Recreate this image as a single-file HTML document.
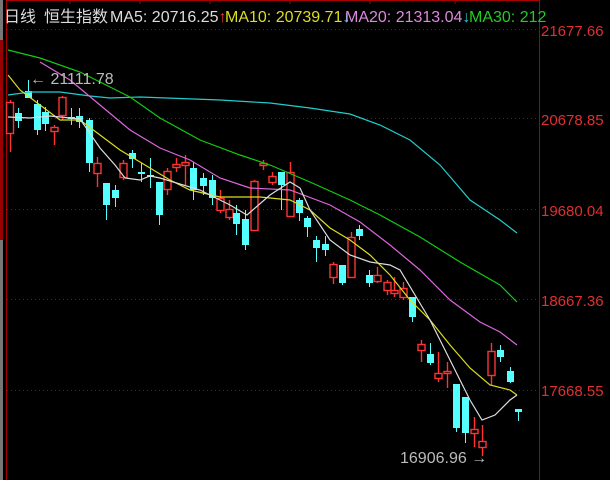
<!DOCTYPE html><html><head><style>
body{margin:0;background:#000;width:610px;height:480px;overflow:hidden;font-family:"Liberation Sans","Noto Sans CJK SC",sans-serif}
</style></head><body>
<svg width="610" height="480" xmlns="http://www.w3.org/2000/svg" style="position:absolute;left:0;top:0">
<rect width="610" height="480" fill="#000"/>
<rect x="0" y="0" width="3" height="480" fill="#777"/>
<rect x="0" y="40" width="3" height="200" fill="#900"/>
<line x1="6.5" y1="0" x2="6.5" y2="480" stroke="#a00" stroke-width="1"/>
<line x1="539.5" y1="0" x2="539.5" y2="480" stroke="#a00" stroke-width="1"/>
<line x1="6" y1="0.5" x2="540" y2="0.5" stroke="#a00"/>
<g stroke="#a00" stroke-width="1">
<line x1="70" y1="0" x2="70" y2="4"/><line x1="140" y1="0" x2="140" y2="4"/><line x1="210" y1="0" x2="210" y2="4"/><line x1="290" y1="0" x2="290" y2="4"/><line x1="370" y1="0" x2="370" y2="4"/><line x1="455" y1="0" x2="455" y2="4"/>
</g>
<g stroke="#a00" stroke-dasharray="1,3">
<line x1="7" y1="29.5" x2="539" y2="29.5"/><line x1="7" y1="118.5" x2="539" y2="118.5"/><line x1="7" y1="209.5" x2="539" y2="209.5"/><line x1="7" y1="299.5" x2="539" y2="299.5"/><line x1="7" y1="390.5" x2="539" y2="390.5"/>
</g>
<g font-size="15" fill="#e03030">
<text x="541" y="36">21677.66</text><text x="541" y="125">20678.85</text><text x="541" y="216">19680.04</text><text x="541" y="306">18667.36</text><text x="541" y="396">17668.55</text>
</g>
<g font-size="16">
<text x="4" y="22" fill="#ddd">日线</text>
<text x="44" y="22" fill="#ddd">恒生指数</text>
<text x="110" y="22" fill="#ddd">MA5: 20716.25<tspan fill="#e33">↑</tspan></text>
<text x="225" y="22" fill="#dd2">MA10: 20739.71<tspan fill="#3cc">↓</tspan></text>
<text x="345" y="22" fill="#d8d">MA20: 21313.04<tspan fill="#3cc">↓</tspan></text>
<text x="469" y="22" fill="#2c2">MA30: 212</text>
</g>
<g stroke="#f33" stroke-width="1.4" fill="#000">
<line x1="10.5" y1="100" x2="10.5" y2="152"/><rect x="6.5" y="102.5" width="7" height="31"/>
<line x1="54.5" y1="125" x2="54.5" y2="145"/><rect x="51" y="127.5" width="7" height="4"/>
<line x1="62.5" y1="96" x2="62.5" y2="120"/><rect x="59" y="97.5" width="7" height="18"/>
<line x1="97.5" y1="157" x2="97.5" y2="187"/><rect x="94" y="163.5" width="7" height="10"/>
<line x1="123.5" y1="160" x2="123.5" y2="180"/><rect x="120" y="163.5" width="7" height="14"/>
<line x1="167.5" y1="168" x2="167.5" y2="195"/><rect x="164" y="171.5" width="7" height="18"/>
<line x1="176.5" y1="158" x2="176.5" y2="172"/><rect x="173" y="164.5" width="7" height="3"/>
<line x1="185.5" y1="155" x2="185.5" y2="185"/><rect x="182" y="162.5" width="7" height="3"/>
<line x1="220.5" y1="190" x2="220.5" y2="213"/><rect x="217" y="198.5" width="7" height="12"/>
<line x1="229.5" y1="200" x2="229.5" y2="220"/><rect x="226" y="209.5" width="7" height="8"/>
<line x1="254.5" y1="180" x2="254.5" y2="230"/><rect x="251" y="181.5" width="7" height="49"/>
<line x1="263.5" y1="160" x2="263.5" y2="170"/><rect x="260" y="163.5" width="7" height="2"/>
<line x1="272.5" y1="172" x2="272.5" y2="185"/><rect x="269" y="176.5" width="7" height="6"/>
<line x1="290.5" y1="162" x2="290.5" y2="216"/><rect x="287" y="172.5" width="7" height="44"/>
<line x1="333.5" y1="262" x2="333.5" y2="284"/><rect x="330" y="264.5" width="7" height="13"/>
<line x1="351.5" y1="232" x2="351.5" y2="277"/><rect x="348" y="237.5" width="7" height="40"/>
<line x1="377.5" y1="267" x2="377.5" y2="283"/><rect x="374" y="275.5" width="7" height="6"/>
<line x1="387.5" y1="280" x2="387.5" y2="295"/><rect x="384" y="282.5" width="7" height="8"/>
<line x1="394.5" y1="277" x2="394.5" y2="297"/><rect x="391" y="290.5" width="7" height="3"/>
<line x1="403.5" y1="282" x2="403.5" y2="300"/><rect x="400" y="288.5" width="7" height="9"/>
<line x1="421.5" y1="340" x2="421.5" y2="362"/><rect x="418" y="344.5" width="7" height="6"/>
<line x1="438.5" y1="352" x2="438.5" y2="382"/><rect x="435" y="373.5" width="7" height="5"/>
<line x1="447.5" y1="362" x2="447.5" y2="388"/><rect x="444" y="371.5" width="7" height="2"/>
<line x1="474.5" y1="417" x2="474.5" y2="447"/><rect x="471" y="429.5" width="7" height="4"/>
<line x1="482.5" y1="425" x2="482.5" y2="456"/><rect x="479" y="441.5" width="7" height="6"/>
<line x1="491.5" y1="343" x2="491.5" y2="385"/><rect x="488" y="351.5" width="7" height="24"/>
</g>
<g stroke="#5ff" fill="#5ff">
<line x1="18.5" y1="108" x2="18.5" y2="128"/><rect x="15" y="113" width="7" height="8" stroke="none"/>
<line x1="28.5" y1="80" x2="28.5" y2="98"/><rect x="25" y="91" width="7" height="7" stroke="none"/>
<line x1="37.5" y1="100" x2="37.5" y2="135"/><rect x="34" y="104" width="7" height="26" stroke="none"/>
<line x1="45.5" y1="107" x2="45.5" y2="131"/><rect x="42" y="112" width="7" height="12" stroke="none"/>
<line x1="71.5" y1="108" x2="71.5" y2="125"/><rect x="68" y="117" width="7" height="2" stroke="none"/>
<line x1="79.5" y1="108" x2="79.5" y2="128"/><rect x="76" y="116" width="7" height="6" stroke="none"/>
<line x1="89.5" y1="118" x2="89.5" y2="172"/><rect x="86" y="120" width="7" height="43" stroke="none"/>
<line x1="106.5" y1="183" x2="106.5" y2="220"/><rect x="103" y="183" width="7" height="22" stroke="none"/>
<line x1="115.5" y1="185" x2="115.5" y2="207"/><rect x="112" y="190" width="7" height="8" stroke="none"/>
<line x1="132.5" y1="150" x2="132.5" y2="168"/><rect x="129" y="153" width="7" height="6" stroke="none"/>
<line x1="141.5" y1="163" x2="141.5" y2="182"/><rect x="138" y="172" width="7" height="2" stroke="none"/>
<line x1="150.5" y1="158" x2="150.5" y2="188"/><rect x="147" y="175" width="7" height="2" stroke="none"/>
<line x1="159.5" y1="182" x2="159.5" y2="225"/><rect x="156" y="182" width="7" height="33" stroke="none"/>
<line x1="193.5" y1="162" x2="193.5" y2="200"/><rect x="190" y="168" width="7" height="22" stroke="none"/>
<line x1="203.5" y1="173" x2="203.5" y2="195"/><rect x="200" y="178" width="7" height="8" stroke="none"/>
<line x1="212.5" y1="175" x2="212.5" y2="205"/><rect x="209" y="180" width="7" height="18" stroke="none"/>
<line x1="236.5" y1="205" x2="236.5" y2="235"/><rect x="233" y="213" width="7" height="11" stroke="none"/>
<line x1="245.5" y1="210" x2="245.5" y2="250"/><rect x="242" y="219" width="7" height="26" stroke="none"/>
<line x1="281.5" y1="172" x2="281.5" y2="210"/><rect x="278" y="172" width="7" height="13" stroke="none"/>
<line x1="299.5" y1="198" x2="299.5" y2="221"/><rect x="296" y="200" width="7" height="13" stroke="none"/>
<line x1="307.5" y1="216" x2="307.5" y2="237"/><rect x="304" y="218" width="7" height="9" stroke="none"/>
<line x1="316.5" y1="236" x2="316.5" y2="262"/><rect x="313" y="240" width="7" height="8" stroke="none"/>
<line x1="325.5" y1="236" x2="325.5" y2="256"/><rect x="322" y="244" width="7" height="6" stroke="none"/>
<line x1="342.5" y1="265" x2="342.5" y2="285"/><rect x="339" y="265" width="7" height="18" stroke="none"/>
<line x1="359.5" y1="225" x2="359.5" y2="240"/><rect x="356" y="229" width="7" height="7" stroke="none"/>
<line x1="369.5" y1="270" x2="369.5" y2="287"/><rect x="366" y="275" width="7" height="8" stroke="none"/>
<line x1="412.5" y1="297" x2="412.5" y2="322"/><rect x="409" y="297" width="7" height="20" stroke="none"/>
<line x1="430.5" y1="343" x2="430.5" y2="365"/><rect x="427" y="354" width="7" height="9" stroke="none"/>
<line x1="456.5" y1="384" x2="456.5" y2="432"/><rect x="453" y="384" width="7" height="44" stroke="none"/>
<line x1="465.5" y1="397" x2="465.5" y2="443"/><rect x="462" y="397" width="7" height="36" stroke="none"/>
<line x1="500.5" y1="345" x2="500.5" y2="362"/><rect x="497" y="350" width="7" height="7" stroke="none"/>
<line x1="510.5" y1="367" x2="510.5" y2="383"/><rect x="507" y="371" width="7" height="11" stroke="none"/>
<line x1="518.5" y1="409" x2="518.5" y2="421"/><rect x="515" y="409" width="7" height="3" stroke="none"/>
</g>
<g fill="none" stroke-width="1.2">
<polyline stroke="#2cc" points="8,95 30,92 60,92 90,96 110,98 140,97 220,100 270,103 310,108 350,114 380,125 410,140 440,165 470,200 500,220 517,233"/>
<polyline stroke="#1c1" points="8,50 40,58 80,72 130,97 160,118 200,140 240,155 270,165 310,182 350,200 380,215 420,237 460,262 500,285 517,302"/>
<polyline stroke="#d6d" points="40,62 70,80 100,105 130,130 160,148 190,160 220,178 250,188 290,190 330,205 360,222 390,245 420,270 450,300 480,322 500,332 517,345"/>
<polyline stroke="#dd2" points="8,75 20,90 40,105 60,120 80,120 100,135 120,150 150,168 170,180 190,190 220,197 260,197 290,200 310,210 330,228 350,240 370,255 390,275 410,300 430,320 450,345 470,368 490,385 510,390 517,395"/>
<polyline stroke="#ddd" points="8,117 30,118 50,116 70,118 80,119 100,148 115,165 125,178 140,180 150,176 160,178 200,190 230,205 247,215 270,195 290,182 300,188 310,210 330,240 350,255 370,262 390,265 400,270 430,320 455,370 470,400 482,420 495,415 510,400 517,395"/>
</g>
<g font-size="16" fill="#bbb">
<text x="30" y="84">← 21111.78</text>
<text x="400" y="463">16906.96 →</text>
</g>
</svg>
</body></html>
